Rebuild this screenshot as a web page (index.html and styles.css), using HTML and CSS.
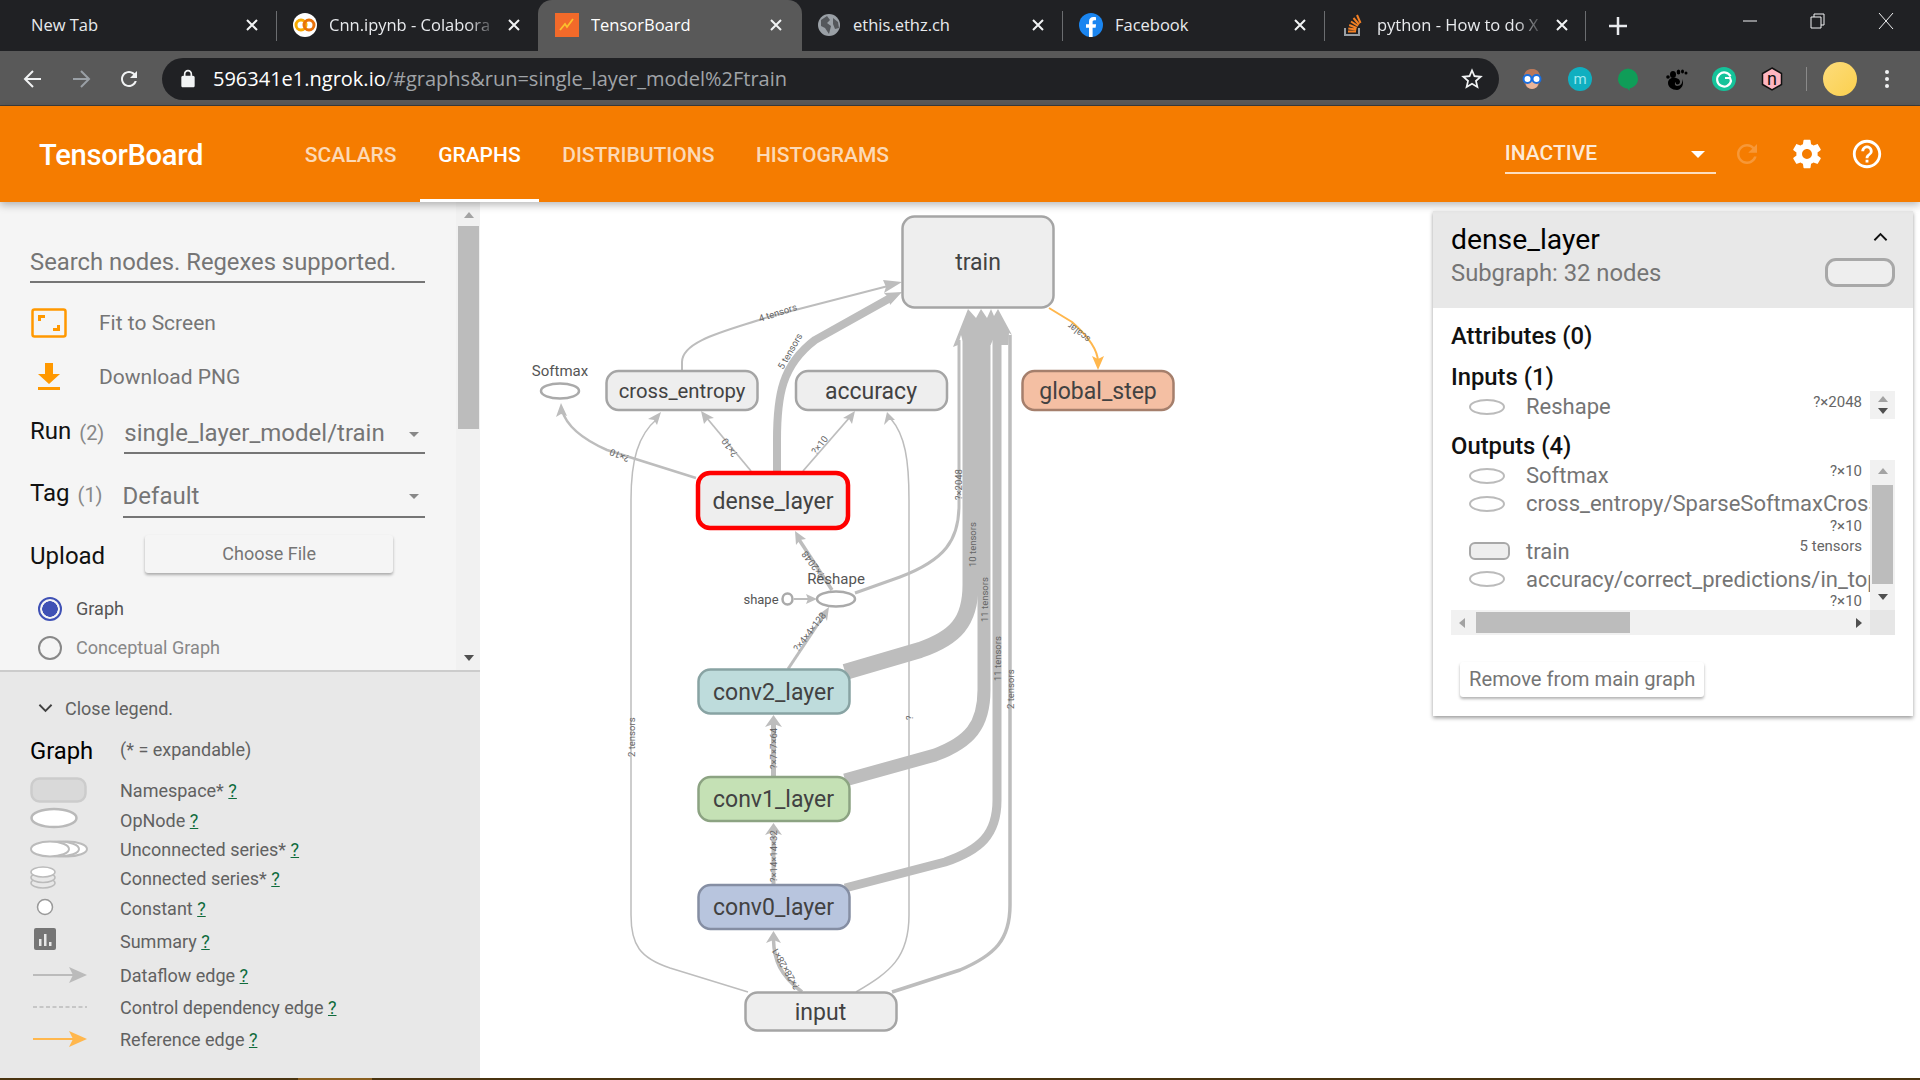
FILE: index.html
```html
<!DOCTYPE html>
<html lang="en">
  <head>
    <title>TensorBoard</title>
    <meta charset="utf-8" />
    <link rel="stylesheet" href="styles.css">
  </head>
  <body>
    <div class="tabstrip">
      <div class="tab">
        <span class="tab-title plain">New Tab</span>
        <svg class="tab-x" viewBox="0 0 12 12"><path d="M1 1l10 10M11 1L1 11"/></svg>
      </div>
      <div class="tab sep">
        <svg class="favicon" viewBox="0 0 24 24"><circle cx="12" cy="12" r="12" fill="#fff"/><circle cx="8" cy="12" r="5" fill="none" stroke="#f9ab00" stroke-width="3"/><circle cx="16" cy="12" r="5" fill="none" stroke="#e8710a" stroke-width="3"/></svg>
        <span class="tab-title">Cnn.ipynb - Colabora</span>
        <svg class="tab-x" viewBox="0 0 12 12"><path d="M1 1l10 10M11 1L1 11"/></svg>
      </div>
      <div class="tab active">
        <svg class="favicon" viewBox="0 0 24 24"><rect width="24" height="24" fill="#f26a2a"/><path d="M5 17l5-6 2 3 6-8" fill="none" stroke="#fbc02d" stroke-width="1.8"/></svg>
        <span class="tab-title plain">TensorBoard</span>
        <svg class="tab-x" viewBox="0 0 12 12"><path d="M1 1l10 10M11 1L1 11"/></svg>
      </div>
      <div class="tab">
        <svg class="favicon" viewBox="0 0 24 24"><circle cx="12" cy="12" r="11" fill="#9aa0a6"/><path d="M4 7l6-4 3 4-3 3 4 3-2 8-4-6-4-2zM16 5l5 4 1 6-4 1-2-5z" fill="#54575b"/></svg>
        <span class="tab-title plain">ethis.ethz.ch</span>
        <svg class="tab-x" viewBox="0 0 12 12"><path d="M1 1l10 10M11 1L1 11"/></svg>
      </div>
      <div class="tab sep">
        <svg class="favicon" viewBox="0 0 24 24"><circle cx="12" cy="12" r="12" fill="#1a85f0"/><path d="M13.6 24V14.8h3l.5-3.5h-3.5V9c0-1 .4-1.7 1.8-1.7H17V4.2c-.5-.1-1.5-.2-2.600-.2-2.700 0-4.400 1.600-4.400 4.500v2.800H7v3.500h3V24z" fill="#fff"/></svg>
        <span class="tab-title plain">Facebook</span>
        <svg class="tab-x" viewBox="0 0 12 12"><path d="M1 1l10 10M11 1L1 11"/></svg>
      </div>
      <div class="tab sep sep-end">
        <svg class="favicon" viewBox="0 0 24 24"><path d="M4 15v7h14v-7" fill="none" stroke="#9aa0a6" stroke-width="2"/><path d="M7 18.5h8M7.3 15.5l8 1M8.2 12l7.5 3M10 8.5l7 4.5M12.5 5l5.5 6.5M16 2l3.5 8" fill="none" stroke="#f48024" stroke-width="2"/></svg>
        <span class="tab-title">python - How to do X</span>
        <svg class="tab-x" viewBox="0 0 12 12"><path d="M1 1l10 10M11 1L1 11"/></svg>
      </div>
      <svg class="newtab" viewBox="0 0 18 18"><path d="M9 0v18M0 9h18"/></svg>
      <div class="winctl">
        <svg class="win-btn" viewBox="0 0 16 16"><path d="M1 8h14"/></svg>
        <svg class="win-btn" viewBox="0 0 16 16"><path d="M4 4V1h10v11h-3M1 4h10v11H1z"/></svg>
        <svg class="win-btn" viewBox="0 0 16 16"><path d="M1 0l14 16M15 0L1 16"/></svg>
      </div>
    </div>

    <div class="toolbar">
      <svg class="nav-icon" viewBox="0 0 24 24"><path d="M20 12H5M12 4l-8 8 8 8" fill="none" stroke="#f1f3f4" stroke-width="2"/></svg>
      <svg class="nav-icon" viewBox="0 0 24 24"><path d="M4 12h15M12 4l8 8-8 8" fill="none" stroke="#9aa0a6" stroke-width="2"/></svg>
      <svg class="nav-icon" viewBox="0 0 24 24"><path fill="#f1f3f4" d="M17.65 6.35C16.2 4.9 14.21 4 12 4c-4.42 0-7.99 3.58-7.99 8s3.57 8 7.99 8c3.73 0 6.84-2.55 7.73-6h-2.08c-.82 2.33-3.04 4-5.65 4-3.31 0-6-2.69-6-6s2.69-6 6-6c1.66 0 3.14.69 4.22 1.78L13 11h7V4l-2.35 2.35z"/></svg>
      <div class="omnibox">
        <svg class="lock" viewBox="0 0 24 24"><path fill="#f1f3f4" d="M18 8h-1V6c0-2.76-2.24-5-5-5S7 3.24 7 6v2H6c-1.1 0-2 .9-2 2v10c0 1.1.9 2 2 2h12c1.1 0 2-.9 2-2V10c0-1.1-.9-2-2-2zM9 6c0-1.66 1.34-3 3-3s3 1.34 3 3v2H9V6z"/></svg>
        <span class="url"><b>596341e1.ngrok.io</b>/#graphs&amp;run=single_layer_model%2Ftrain</span>
        <svg class="star" viewBox="0 0 24 24"><path fill="#f1f3f4" d="M22 9.24l-7.19-.62L12 2 9.19 8.63 2 9.24l5.46 4.73L5.82 21 12 17.27 18.18 21l-1.63-7.03L22 9.24zM12 15.4l-3.76 2.27 1-4.28-3.32-2.88 4.38-.38L12 6.1l1.71 4.04 4.38.38-3.32 2.88 1 4.28L12 15.4z"/></svg>
      </div>
      <div class="exts">
        <svg class="ext" viewBox="0 0 24 24"><path d="M4 13C3 4 8 2 12 2s9 2 8 11c0 5-4 9-8 9s-8-4-8-9z" fill="#b9785a"/><ellipse cx="12" cy="17" rx="6" ry="5" fill="#e9b59a"/><circle cx="7.5" cy="12" r="4" fill="#fff" stroke="#1a6fe0" stroke-width="2"/><circle cx="16.5" cy="12" r="4" fill="#fff" stroke="#1a6fe0" stroke-width="2"/></svg>
        <svg class="ext" viewBox="0 0 24 24"><circle cx="12" cy="12" r="12" fill="#10afc0"/><text x="12" y="17" class="ext-m">m</text></svg>
        <svg class="ext" viewBox="0 0 24 24"><path d="M12 1.5a10.5 10.5 0 0 1 10 10.5c0 5-4 8.5-8.5 9.5V24l-2-2.500C6 21 2 17 2 12A10.5 10.5 0 0 1 12 1.5z" fill="#0f9d58"/></svg>
        <svg class="ext" viewBox="0 0 24 24"><path d="M13 23c-5 0-9-3-9-7 0-5 5-6 8-5 4 1 5 4 3 6-2 1-4 0-3-2-2 1-1 4 1 4 4 0 6-3 5-7 3 5-1 11-5 11z" fill="#000"/><ellipse cx="9" cy="7.5" rx="3" ry="3.5"/><circle cx="4" cy="10" r="1.8"/><ellipse cx="14.5" cy="5" rx="1.8" ry="2.5"/><ellipse cx="18.5" cy="4.5" rx="1.5" ry="2"/><circle cx="22" cy="6" r="1.5"/></svg>
        <svg class="ext" viewBox="0 0 24 24"><circle cx="12" cy="12" r="12" fill="#15c39a"/><path d="M18.5 9.5A7 7 0 1 0 19 14l-1-3h-5" fill="none" stroke="#fff" stroke-width="2.2"/></svg>
        <svg class="ext" viewBox="0 0 24 24"><path d="M12 1l9.5 5.5v11L12 23l-9.5-5.5v-11z" fill="#ffb6c1" stroke="#111" stroke-width="1.5"/><text x="12" y="18" class="ext-n">n</text></svg>
      </div>
      <div class="tool-sep"></div>
      <div class="avatar"></div>
      <div class="kebab"><i></i><i></i><i></i></div>
    </div>

    <header class="tb-head">
      <div class="tb-logo">TensorBoard</div>
      <nav class="tb-nav">
        <a>SCALARS</a>
        <a class="on">GRAPHS</a>
        <a>DISTRIBUTIONS</a>
        <a>HISTOGRAMS</a>
      </nav>
      <div class="tb-right">
        <div class="tb-select">INACTIVE<span class="tb-caret"></span></div>
        <svg class="tb-icon dim" viewBox="0 0 24 24"><path d="M17.65 6.35C16.2 4.9 14.21 4 12 4c-4.42 0-7.99 3.58-7.99 8s3.57 8 7.99 8c3.73 0 6.84-2.55 7.73-6h-2.08c-.82 2.33-3.04 4-5.65 4-3.31 0-6-2.69-6-6s2.69-6 6-6c1.66 0 3.14.69 4.22 1.78L13 11h7V4l-2.35 2.35z"/></svg>
        <svg class="tb-icon" viewBox="0 0 24 24"><path d="M19.43 12.98c.04-.32.07-.64.07-.98s-.03-.66-.07-.98l2.11-1.65c.19-.15.24-.42.12-.64l-2-3.46c-.12-.22-.39-.3-.61-.22l-2.49 1c-.52-.4-1.08-.73-1.69-.98l-.38-2.65C14.46 2.18 14.25 2 14 2h-4c-.25 0-.46.18-.49.42l-.38 2.65c-.61.25-1.17.59-1.69.98l-2.49-1c-.23-.09-.49 0-.61.22l-2 3.46c-.13.22-.07.49.12.64l2.11 1.65c-.04.32-.07.65-.07.98s.03.66.07.98l-2.11 1.65c-.19.15-.24.42-.12.64l2 3.46c.12.22.39.3.61.22l2.49-1c.52.4 1.08.73 1.69.98l.38 2.65c.03.24.24.42.49.42h4c.25 0 .46-.18.49-.42l.38-2.65c.61-.25 1.17-.59 1.69-.98l2.49 1c.23.09.49 0 .61-.22l2-3.46c.12-.22.07-.49-.12-.64l-2.11-1.65zM12 15.5c-1.93 0-3.5-1.57-3.5-3.5s1.57-3.5 3.5-3.5 3.5 1.57 3.5 3.5-1.57 3.5-3.5 3.5z"/></svg>
        <svg class="tb-icon" viewBox="0 0 24 24"><path d="M11 18h2v-2h-2v2zm1-16C6.48 2 2 6.48 2 12s4.48 10 10 10 10-4.48 10-10S17.52 2 12 2zm0 18c-4.41 0-8-3.59-8-8s3.59-8 8-8 8 3.59 8 8-3.59 8-8 8zm0-14c-2.21 0-4 1.79-4 4h2c0-1.1.9-2 2-2s2 .9 2 2c0 2-3 1.75-3 5h2c0-2.25 3-2.5 3-5 0-2.21-1.79-4-4-4z"/></svg>
      </div>
    </header>

    <main class="board">
      <aside class="sidebar">
        <section class="controls">
          <div class="controls-body">
            <div class="search">Search nodes. Regexes supported.</div>
            <div class="action">
              <svg class="action-icon" viewBox="0 0 36 30"><rect x="1.5" y="1.5" width="33" height="27" rx="2" fill="none" stroke="#ff9800" stroke-width="2.5"/><path d="M7 13V7h7v3h-4v3zM29 17v6h-7v-3h4v-3z" fill="#ff9800"/></svg>
              Fit to Screen
            </div>
            <div class="action">
              <svg class="action-icon" viewBox="0 0 36 30"><path d="M14 1h8v11h7L18 22 7 12h7zM7 25h22v3H7z" fill="#ff9800"/></svg>
              Download PNG
            </div>
            <div class="field run">
              <span class="field-name">Run</span><span class="field-count">(2)</span>
              <div class="dropdown">single_layer_model/train<span class="drop-caret"></span></div>
            </div>
            <div class="field tag">
              <span class="field-name">Tag</span><span class="field-count">(1)</span>
              <div class="dropdown">Default<span class="drop-caret"></span></div>
            </div>
            <div class="upload">
              <span class="field-name">Upload</span>
              <div class="paper-btn choose">Choose File</div>
            </div>
            <div class="radio on"><span class="radio-dot"></span>Graph</div>
            <div class="radio"><span class="radio-dot"></span>Conceptual Graph</div>
          </div>
          <div class="scrollbar main-scroll">
            <span class="arrow up pale"></span>
            <div class="track"><div class="thumb"></div></div>
            <span class="arrow down"></span>
          </div>
        </section>

        <section class="legend">
          <div class="legend-toggle">
            <svg class="chevron" viewBox="0 0 16 10"><path d="M1.5 1.5L8 8l6.5-6.5"/></svg>
            Close legend.
          </div>
          <div class="legend-grid">
            <div class="legend-title">Graph</div><div class="legend-note">(* = expandable)</div>

            <svg class="key" viewBox="0 0 60 26"><rect x="1.5" y="1.5" width="54" height="23" rx="8" fill="#d9d9d9" stroke="#ccc" stroke-width="2.5"/></svg>
            <div class="key-name">Namespace* <a>?</a></div>

            <svg class="key" viewBox="0 0 60 26"><ellipse cx="24" cy="11" rx="22.5" ry="9" fill="#fff" stroke="#b9b9b9" stroke-width="2.5"/></svg>
            <div class="key-name">OpNode <a>?</a></div>

            <svg class="key" viewBox="0 0 60 26"><g fill="#fff" stroke="#bbb" stroke-width="2"><ellipse cx="37" cy="13" rx="20" ry="7.5"/><ellipse cx="29" cy="13" rx="20" ry="7.5"/><ellipse cx="20" cy="13" rx="19" ry="7.5"/></g></svg>
            <div class="key-name">Unconnected series* <a>?</a></div>

            <svg class="key" viewBox="0 0 60 26"><g fill="#e8e8e8" stroke="#bbb" stroke-width="1.5"><ellipse cx="13" cy="18" rx="12" ry="5"/><ellipse cx="13" cy="12.5" rx="12" ry="5"/><ellipse cx="13" cy="7" rx="12" ry="5" fill="#fff"/></g></svg>
            <div class="key-name">Connected series* <a>?</a></div>

            <svg class="key" viewBox="0 0 60 26"><circle cx="15" cy="12" r="7.5" fill="#fff" stroke="#999" stroke-width="1.5"/></svg>
            <div class="key-name">Constant <a>?</a></div>

            <svg class="key" viewBox="0 0 60 26"><rect x="4" y="0" width="22" height="22" rx="2" fill="#757575"/><path d="M9 11h2.5v7H9zM14 6h2.5v12H14zM19 14h2.5v4H19z" fill="#e8e8e8"/></svg>
            <div class="key-name">Summary <a>?</a></div>

            <svg class="key" viewBox="0 0 60 26"><path d="M3 13h40" stroke="#bbb" stroke-width="2"/><path d="M39 5l18 8-18 8 4-8z" fill="#bbb"/></svg>
            <div class="key-name">Dataflow edge <a>?</a></div>

            <svg class="key" viewBox="0 0 60 26"><path d="M3 13h54" stroke="#bbb" stroke-width="1.5" stroke-dasharray="4 2.5"/></svg>
            <div class="key-name">Control dependency edge <a>?</a></div>

            <svg class="key" viewBox="0 0 60 26"><path d="M3 13h40" stroke="#ffb74d" stroke-width="2"/><path d="M39 5l18 8-18 8 4-8z" fill="#ffb74d"/></svg>
            <div class="key-name">Reference edge <a>?</a></div>
          </div>
        </section>
      </aside>

      <div class="graph">
        <svg class="graph-svg" viewBox="480 202 1440 876">
          <g class="edges">
            <path class="e" stroke-width="2" d="M682 372V362C682 340 730 330 768 317L892 285"/>
            <path class="e" stroke-width="8" d="M777 473V440C777 395 782 365 815 340L892 297"/>
            <path class="e" stroke-width="2.5" d="M696 478L607 450C580 438 566 425 562 410"/>
            <path class="e" stroke-width="1.8" d="M751 471L706 417"/>
            <path class="e" stroke-width="1.8" d="M803 471L850 417"/>
            <path class="e" stroke-width="1.5" d="M748 992L670 968C640 958 631 945 631 915V500C631 460 638 435 657 419"/>
            <path class="e" stroke-width="1.5" d="M856 992C890 972 909 958 909 915V500C909 460 905 435 891 419"/>
            <path class="e" stroke-width="3.5" d="M802 992C780 975 774 960 773.5 940"/>
            <path class="e" stroke-width="4" d="M773.5 884V832"/>
            <path class="e" stroke-width="5" d="M773.5 776V724"/>
            <path class="e" stroke-width="3" d="M788 669L826 612"/>
            <path class="e" stroke-width="3.5" d="M832 590L798 538"/>
            <path class="e" stroke-width="2" d="M794 599H808"/>
            <path class="e" stroke-width="3" d="M855 593L900 577C945 560 959 540 959 505V340"/>
            <path class="e" stroke-width="16" d="M845 672L920 650C955 638 970.5 622 970.5 585V335"/>
            <path class="e" stroke-width="13" d="M845 780L935 755C970 742 984 725 984 690V335"/>
            <path class="e" stroke-width="9" d="M845 888L945 862C980 850 997 835 997 800V335"/>
            <path class="e" stroke-width="3.5" d="M892 992L960 970C995 955 1010 940 1010 905V335"/>
            <path class="e-ref" d="M1049 308L1072 322C1090 338 1098 350 1098 362"/>
          </g>
          <g class="heads">
            <polygon points="953,347 968,309 976,318 981,309 987,318 991,309 994,316 998,309 1012,335 1009,333 1008.2,345 1000.8,345 1000,340 992.8,340 990.7,345 964,345 961,335 958,345"/>
            <polygon points="902,282 883,280 886,287 884,293"/>
            <polygon points="902,292 884,293 889,298 890,305"/>
            <polygon points="561,403 556,417 561,414 567,416"/>
            <polygon points="701,411 704,424 708,419 714,418"/>
            <polygon points="855,411 843,418 849,419 852,424"/>
            <polygon points="661,412 648,419 654,420 657,425"/>
            <polygon points="887,412 884,425 889,420 895,420"/>
            <polygon points="773.5,715 765,727 773.5,724 782,727"/>
            <polygon points="773.5,823 765,835 773.5,832 782,835"/>
            <polygon points="773.5,931 766,943 773.5,940 781,943"/>
            <polygon points="829,607 818,615 824,615 827,621"/>
            <polygon points="795,531 796,545 800,540 806,539"/>
            <polygon points="817,599 806,594 808,599 806,604"/>
          </g>
          <polygon class="head-ref" points="1098,370 1092,356 1098,359 1104,356"/>

          <g class="labels">
            <text transform="translate(760 322) rotate(-18)">4 tensors</text>
            <text transform="translate(783 370) rotate(-60)">5 tensors</text>
            <text transform="translate(1091 338) rotate(218)">scalar</text>
            <text transform="translate(630 456) rotate(202)">?×10</text>
            <text transform="translate(738 454) rotate(235)">?×10</text>
            <text transform="translate(816 455) rotate(-52)">?×10</text>
            <text transform="translate(962 500) rotate(-90)">?×2048</text>
            <text transform="translate(976 567) rotate(-90)">10 tensors</text>
            <text transform="translate(988 622) rotate(-90)">11 tensors</text>
            <text transform="translate(1001 681) rotate(-90)">11 tensors</text>
            <text transform="translate(1014 709) rotate(-90)">2 tensors</text>
            <text transform="translate(635 757) rotate(-90)">2 tensors</text>
            <text transform="translate(913 720) rotate(-90)">?</text>
            <text transform="translate(825 575) rotate(233)">?×2048</text>
            <text transform="translate(798 652) rotate(-52)">?×4×4×128</text>
            <text transform="translate(777 769) rotate(-90)">?×7×7×64</text>
            <text transform="translate(777 882) rotate(-90)">?×14×14×32</text>
            <text transform="translate(800 987) rotate(240)">?×28×28×1</text>
          </g>

          <g class="nodes">
            <rect class="n" x="902.5" y="216.5" width="151" height="91" rx="12"/>
            <text class="n-text" x="978" y="262">train</text>
            <rect class="n" x="606.5" y="371" width="151" height="39" rx="12"/>
            <text class="n-text fit" x="682" y="391">cross_entropy</text>
            <rect class="n" x="796" y="371" width="151" height="39" rx="12"/>
            <text class="n-text" x="871" y="391">accuracy</text>
            <rect class="n n-ref" x="1022.5" y="371" width="151" height="39" rx="12"/>
            <text class="n-text" x="1098" y="391">global_step</text>
            <rect class="n n-sel" x="698" y="473" width="150" height="55" rx="12"/>
            <text class="n-text" x="773" y="501">dense_layer</text>
            <rect class="n n-c2" x="698.5" y="669.5" width="151" height="44" rx="12"/>
            <text class="n-text" x="773.5" y="692">conv2_layer</text>
            <rect class="n n-c1" x="698.5" y="777" width="151" height="44" rx="12"/>
            <text class="n-text" x="773.5" y="799.5">conv1_layer</text>
            <rect class="n n-c0" x="698.5" y="885" width="151" height="44" rx="12"/>
            <text class="n-text" x="773.5" y="907.5">conv0_layer</text>
            <rect class="n" x="745.5" y="992.5" width="151" height="38" rx="12"/>
            <text class="n-text" x="820.5" y="1012">input</text>
            <ellipse class="op" cx="560" cy="391" rx="19" ry="7.5"/>
            <text class="op-text" x="560" y="371">Softmax</text>
            <ellipse class="op" cx="836" cy="599" rx="19" ry="7.5"/>
            <text class="op-text" x="836" y="579">Reshape</text>
            <ellipse class="op" cx="787.5" cy="599" rx="5" ry="5.5"/>
            <text class="op-text small" x="761" y="599">shape</text>
          </g>
        </svg>

        <div class="info">
          <div class="info-head">
            <div>
              <div class="info-title">dense_layer</div>
              <div class="info-sub">Subgraph: 32 nodes</div>
            </div>
            <div class="info-head-side">
              <svg class="chevron up" viewBox="0 0 16 10"><path d="M1.5 8.5L8 2l6.5 6.5"/></svg>
              <span class="node-chip"></span>
            </div>
          </div>
          <div class="info-body">
            <div class="info-h first">Attributes (0)</div>
            <div class="info-h">Inputs (1)</div>
            <div class="io-box short">
              <div class="io-list">
                <div class="io-row"><span class="ico"><i class="oval"></i></span><span class="io-name">Reshape</span><span class="io-size">?×2048</span></div>
              </div>
              <div class="scrollbar mini"><span class="arrow up pale"></span><span class="arrow down"></span></div>
            </div>
            <div class="info-h">Outputs (4)</div>
            <div class="io-box tall">
              <div class="io-list">
                <div class="io-row"><span class="ico"><i class="oval"></i></span><span class="io-name">Softmax</span><span class="io-size">?×10</span></div>
                <div class="io-row"><span class="ico"><i class="oval"></i></span><span class="io-name">cross_entropy/SparseSoftmaxCross</span></div>
                <div class="io-size-line">?×10</div>
                <div class="io-row"><span class="ico"><i class="pill"></i></span><span class="io-name">train</span><span class="io-size">5 tensors</span></div>
                <div class="io-row"><span class="ico"><i class="oval"></i></span><span class="io-name">accuracy/correct_predictions/in_top</span></div>
                <div class="io-size-line">?×10</div>
              </div>
              <div class="scrollbar side">
                <span class="arrow up pale"></span>
                <div class="track"><div class="thumb"></div></div>
                <span class="arrow down"></span>
              </div>
            </div>
            <div class="hscroll">
              <span class="arrow left pale"></span>
              <div class="hscroll-track"><div class="hscroll-thumb"></div></div>
              <span class="arrow right"></span>
              <span class="hscroll-corner"></span>
            </div>
            <div class="paper-btn remove">Remove from main graph</div>
          </div>
        </div>
      </div>
    </main>
    <footer class="taskbar-edge"><span></span></footer>
  </body>
</html>
```

FILE: styles.css
```css
* {
  box-sizing: border-box;
}
html, body {
  margin: 0;
  height: 1080px;
  overflow: hidden;
  background: #fff;
}
body {
  font-family: Roboto, sans-serif;
  display: flex;
  flex-direction: column;
}

/* browser chrome */
.tabstrip {
  height: 51px;
  background: #202124;
  display: flex;
  align-items: stretch;
  padding-left: 14px;
  font-family: "Open Sans", sans-serif;
  font-size: 16.5px;
  color: #e8eaed;
}
.tab {
  width: 262px;
  display: flex;
  align-items: center;
  padding: 0 18px 2px 17px;
  position: relative;
}
.tab.sep::before, .tab.sep-end::after {
  content: "";
  position: absolute;
  top: 11px;
  bottom: 10px;
  width: 1px;
  background: #6b6d70;
  left: 0;
}
.tab.sep-end::after {
  left: auto;
  right: 0;
}
.tab.active {
  width: 264px;
  margin-right: -2px;
  background: #595959;
  border-radius: 14px 14px 0 0;
  color: #fff;
  padding-right: 20px;
}
.favicon {
  width: 24px;
  height: 24px;
  flex: none;
  margin-right: 12px;
}
.tab-title {
  flex: 1;
  white-space: nowrap;
  overflow: hidden;
  -webkit-mask-image: linear-gradient(90deg, #000 82%, transparent 100%);
  mask-image: linear-gradient(90deg, #000 82%, transparent 100%);
}
.tab-title.plain {
  -webkit-mask-image: none;
  mask-image: none;
}
.tab-x {
  width: 12px;
  height: 12px;
  flex: none;
  margin-left: 10px;
  fill: none;
  stroke: #f1f3f4;
  stroke-width: 2;
}
.newtab {
  width: 18px;
  height: 18px;
  align-self: center;
  margin-left: 23px;
  stroke: #e8eaed;
  stroke-width: 2.5;
}
.winctl {
  margin-left: auto;
  display: flex;
  align-items: flex-start;
  padding: 13px 26px 0 0;
  gap: 52px;
}
.win-btn {
  width: 16px;
  height: 16px;
  fill: none;
  stroke: #f1f3f4;
  stroke-width: 1;
}
.toolbar {
  height: 55px;
  background: #595959;
  border-bottom: 1px solid #3c3c3c;
  display: flex;
  align-items: center;
  padding: 1px 0 0 21px;
}
.nav-icon {
  width: 24px;
  height: 24px;
  flex: none;
  margin-right: 24px;
}
.omnibox {
  width: 1337px;
  height: 42px;
  margin-left: -3px;
  border-radius: 21px;
  background: #202124;
  display: flex;
  align-items: center;
  padding: 0 13px 0 16px;
  font-family: "Open Sans", sans-serif;
  font-size: 20px;
  color: #a0a4a8;
}
.lock {
  width: 20px;
  height: 20px;
  flex: none;
  margin-right: 15px;
}
.url {
  flex: 1;
  white-space: nowrap;
}
.url b {
  font-weight: 400;
  color: #fff;
}
.star {
  width: 26px;
  height: 26px;
  flex: none;
  margin-right: 1px;
}
.exts {
  display: flex;
  align-items: center;
  gap: 24px;
  margin-left: 21px;
}
.ext {
  width: 24px;
  height: 24px;
  display: block;
}
.ext-m, .ext-n {
  text-anchor: middle;
  font-family: Roboto, sans-serif;
  font-size: 15px;
  fill: #9fe8ef;
}
.ext-n {
  font-size: 18px;
  fill: #111;
}
.tool-sep {
  width: 1px;
  height: 24px;
  background: #8a8a8a;
  margin-left: 22px;
}
.avatar {
  width: 34px;
  height: 34px;
  border-radius: 50%;
  background: linear-gradient(135deg, #fddc7b, #fbd04e);
  margin-left: 16px;
}
.kebab {
  margin-left: 28px;
  display: flex;
  flex-direction: column;
  gap: 3px;
}
.kebab i {
  width: 4px;
  height: 4px;
  border-radius: 50%;
  background: #f1f3f4;
}

/* tensorboard header */
.tb-head {
  height: 96px;
  background: #f57c00;
  display: flex;
  align-items: stretch;
  color: #fff;
  position: relative;
  z-index: 2;
  box-shadow: 0 3px 8px rgba(0, 0, 0, .28);
}
.tb-logo {
  font-size: 29.2px;
  font-weight: 500;
  letter-spacing: -.3px;
  width: 286.3px;
  padding: 32px 0 0 39px;
}
.tb-nav {
  display: flex;
  gap: 4.6px;
}
.tb-nav a {
  padding: 37px 18.5px 0;
  font-size: 21px;
  font-weight: 500;
  color: rgba(255, 255, 255, .72);
  border-bottom: 3px solid transparent;
}
.tb-nav a.on {
  color: #fff;
  border-bottom-color: #fff;
}
.tb-right {
  margin-left: auto;
  display: flex;
  align-items: flex-start;
  padding: 34px 36.5px 0 0;
}
.tb-select {
  width: 210.8px;
  height: 34px;
  padding-top: 1px;
  border-bottom: 2px solid rgba(255, 255, 255, .75);
  font-size: 21px;
  font-weight: 500;
  color: rgba(255, 255, 255, .85);
  position: relative;
}
.tb-caret {
  position: absolute;
  right: 11px;
  top: 11px;
  border: 7px solid transparent;
  border-top: 7px solid #fff;
  border-bottom: 0;
}
.tb-icon {
  width: 34px;
  height: 34px;
  fill: #fff;
  margin-left: 26px;
  margin-top: -3px;
  flex: none;
}
.tb-icon.dim {
  margin-left: 16.4px;
  margin-right: 1.5px;
  fill: rgba(255, 255, 255, .22);
  width: 30px;
}

/* sidebar */
.board {
  flex: 1;
  display: flex;
  min-height: 0;
}
.sidebar {
  width: 480px;
  flex: none;
  display: flex;
  flex-direction: column;
  color: #000;
}
.controls {
  height: 470px;
  background: #f5f5f5;
  border-bottom: 2px solid #ccc;
  display: flex;
  flex: none;
}
.controls-body {
  flex: 1;
  padding: 40px 31px 0 30px;
}
.search {
  height: 41px;
  border-bottom: 2px solid #757575;
  font-size: 23.8px;
  line-height: 41px;
  color: #757575;
}
.action {
  height: 54px;
  display: flex;
  align-items: center;
  font-size: 21px;
  color: #757575;
}
.action:nth-child(2) {
  margin-top: 13px;
}
.action-icon {
  width: 36px;
  height: 30px;
  margin: 0 32px 0 1px;
  flex: none;
}
.field {
  display: flex;
  align-items: flex-start;
}
.field.run {
  margin-top: 13px;
  height: 62px;
}
.field.tag {
  height: 56px;
}
.field-name {
  font-size: 24px;
  color: #111;
}
.field-count {
  color: #888;
  font-size: 20px;
  margin: 4px 0 0 8px;
}
.dropdown {
  flex: 1;
  margin-left: 20px;
  border-bottom: 2px solid #757575;
  color: #757575;
  position: relative;
  font-size: 24px;
}
.run .dropdown {
  height: 37px;
  padding-top: 2px;
}
.tag .dropdown {
  height: 39px;
  padding-top: 3px;
}
.drop-caret {
  position: absolute;
  right: 6px;
  top: 15px;
  border: 5px solid transparent;
  border-top: 5px solid #888;
  border-bottom: 0;
}
.upload {
  display: flex;
  align-items: flex-start;
}
.upload .field-name {
  padding-top: 7px;
}
.paper-btn {
  background: #f5f5f5;
  border-radius: 3px;
  box-shadow: 0 2px 3px rgba(0, 0, 0, .3);
  font-size: 20.2px;
  color: #757575;
}
.choose {
  width: 248px;
  height: 38px;
  line-height: 38px;
  text-align: center;
  font-size: 18px;
  margin-left: 40px;
}
.radio {
  display: flex;
  align-items: center;
  height: 39px;
  font-size: 18.1px;
  color: #888;
  padding-left: 8px;
}
.radio.on {
  margin-top: 16px;
  color: #555;
}
.radio-dot {
  width: 24px;
  height: 24px;
  border-radius: 50%;
  border: 2.5px solid #888;
  margin-right: 14px;
  flex: none;
}
.radio.on .radio-dot {
  border-color: #3f51b5;
  background: radial-gradient(circle, #3f51b5 7.5px, #f5f5f5 8px);
}

/* native looking scrollbars */
.scrollbar {
  background: #f1f1f1;
  display: flex;
  flex-direction: column;
  align-items: center;
  flex: none;
}
.main-scroll {
  width: 24px;
  padding: 10px 1px 9px 2px;
}
.track {
  flex: 1;
  width: 100%;
}
.main-scroll .track {
  margin-top: 8px;
}
.thumb {
  width: 100%;
  height: 203px;
  background: #bcbcbc;
}
.arrow {
  width: 0;
  height: 0;
  flex: none;
  border: 5.5px solid transparent;
}
.arrow.up {
  border-top: 0;
  border-bottom: 6px solid #505050;
}
.arrow.down {
  border-bottom: 0;
  border-top: 6px solid #505050;
}
.arrow.left {
  border-left: 0;
  border-right: 6px solid #505050;
}
.arrow.right {
  border-right: 0;
  border-left: 6px solid #505050;
}
.arrow.up.pale {
  border-bottom-color: #a3a3a3;
}
.arrow.left.pale {
  border-right-color: #a3a3a3;
}

/* legend */
.legend {
  flex: 1;
  background: #e8e8e8;
  padding: 24px 0 0 30px;
  color: #616161;
  font-size: 18px;
}
.legend-toggle {
  display: flex;
  align-items: center;
  height: 24px;
}
.chevron {
  width: 15px;
  height: 10px;
  fill: none;
  stroke: #424242;
  stroke-width: 2;
  margin: 0 12px 0 8px;
}
.legend-grid {
  display: grid;
  grid-template-columns: 90px 1fr;
  grid-template-rows: 48px 31px 29px 29px 29px 31px 35px 33px 32px 32px;
  align-items: center;
  margin-top: 6.5px;
}
.legend-title {
  font-size: 23.8px;
  color: #000;
}
.legend-note {
  margin-top: -3px;
}
.key {
  width: 60px;
  height: 26px;
  display: block;
  margin-top: -1px;
}
.key-name a {
  color: #0f6b3c;
  text-decoration: underline;
}

/* graph */
.graph {
  flex: 1;
  position: relative;
  background: #fff;
  overflow: hidden;
}
.graph-svg {
  display: block;
  width: 1440px;
  height: 876px;
}
.e {
  fill: none;
  stroke: #bdbdbd;
}
.e-ref {
  fill: none;
  stroke: #ffb74d;
  stroke-width: 2;
}
.heads polygon {
  fill: #bdbdbd;
}
.head-ref {
  fill: #ffb74d;
}
.labels text {
  font-size: 9.5px;
  fill: #666;
  stroke: none;
}
.n {
  fill: #eee;
  stroke: #a5a5a5;
  stroke-width: 2.5;
}
.n-ref {
  fill: #f4bfa3;
  stroke: #a57f6c;
}
.n-sel {
  stroke: #f00;
  stroke-width: 4.5;
}
.n-c2 {
  fill: #bedcdc;
  stroke: #88a3a3;
}
.n-c1 {
  fill: #c5e1b5;
  stroke: #8ca382;
}
.n-c0 {
  fill: #b8c5de;
  stroke: #858ea3;
}
.n-text {
  font-size: 23px;
  fill: #424242;
  text-anchor: middle;
  dominant-baseline: central;
}
.n-text.fit {
  font-size: 20.3px;
}
.op {
  fill: #fff;
  stroke: #aaa;
  stroke-width: 2.5;
}
.op-text {
  font-size: 15px;
  fill: #555;
  text-anchor: middle;
  dominant-baseline: central;
}
.op-text.small {
  font-size: 13px;
}

/* info card */
.info {
  position: absolute;
  top: 9px;
  right: 7px;
  width: 480px;
  height: 505px;
  background: #fff;
  box-shadow: 0 2px 4px rgba(0, 0, 0, .4);
}
.info-head {
  height: 97px;
  background: #e8e8e8;
  padding: 12px 18px 0 18px;
  display: flex;
  justify-content: space-between;
}
.info-title {
  font-size: 28.3px;
  line-height: 34px;
  color: #000;
}
.info-sub {
  font-size: 23.8px;
  line-height: 28px;
  margin-top: 2px;
  color: #757575;
}
.info-head-side {
  display: flex;
  flex-direction: column;
  align-items: flex-end;
}
.info-head-side .chevron {
  margin: 9px 7px 0 0;
  stroke: #111;
}
.node-chip {
  width: 70px;
  height: 29px;
  margin-top: 16px;
  border-radius: 11px;
  background: #eee;
  border: 3px solid #a8a8a8;
}
.info-body {
  padding: 0 18px;
}
.info-h {
  font-size: 23.8px;
  font-weight: 500;
  line-height: 28px;
  margin-top: 13px;
  color: #111;
}
.info-h.first {
  margin-top: 14px;
}
.io-box {
  display: flex;
}
.io-box.short {
  height: 28px;
}
.io-box.tall {
  height: 150px;
}
.io-list {
  flex: 1;
  min-width: 0;
  overflow: hidden;
  padding-top: 1.5px;
}
.io-row {
  display: flex;
  align-items: center;
  height: 28px;
  white-space: nowrap;
  font-size: 22px;
  color: #757575;
}
.ico {
  width: 75px;
  flex: none;
  padding-left: 18px;
  display: flex;
}
.oval {
  width: 36px;
  height: 16px;
  border-radius: 50%;
  border: 2px solid #bbb;
  background: #fff;
}
.pill {
  width: 41px;
  height: 18px;
  border-radius: 6px;
  border: 2px solid #a8a8a8;
  background: #eee;
}
.io-size {
  margin-left: auto;
  padding: 0 8px 10px 0;
  font-size: 15px;
  color: #666;
}
.io-size-line {
  height: 19.5px;
  line-height: 17px;
  padding-right: 8px;
  text-align: right;
  font-size: 15px;
  color: #666;
}
.mini {
  width: 25px;
  justify-content: center;
  gap: 6px;
}
.side {
  width: 25px;
  padding: 8px 2px 10.5px;
}
.side .track {
  margin-top: 11px;
}
.side .thumb {
  height: 99px;
}
.hscroll {
  height: 25px;
  background: #f1f1f1;
  display: flex;
  align-items: center;
  padding-left: 8px;
}
.hscroll-track {
  flex: 1;
  padding-left: 11px;
  height: 21px;
}
.hscroll-thumb {
  width: 154px;
  height: 100%;
  background: #bcbcbc;
}
.hscroll-corner {
  width: 25px;
  height: 25px;
  margin-left: 8px;
  background: #e6e6e6;
  flex: none;
}
.remove {
  background: #fff;
  display: inline-block;
  height: 35.5px;
  line-height: 35px;
  padding: 0 9px;
  margin: 26.5px 0 0 9px;
  white-space: nowrap;
}
.taskbar-edge {
  height: 2px;
  flex: none;
  background: #4a3410;
  padding-left: 298px;
}
.taskbar-edge span {
  display: block;
  width: 74px;
  height: 2px;
  background: #8a5f1f;
}
```
